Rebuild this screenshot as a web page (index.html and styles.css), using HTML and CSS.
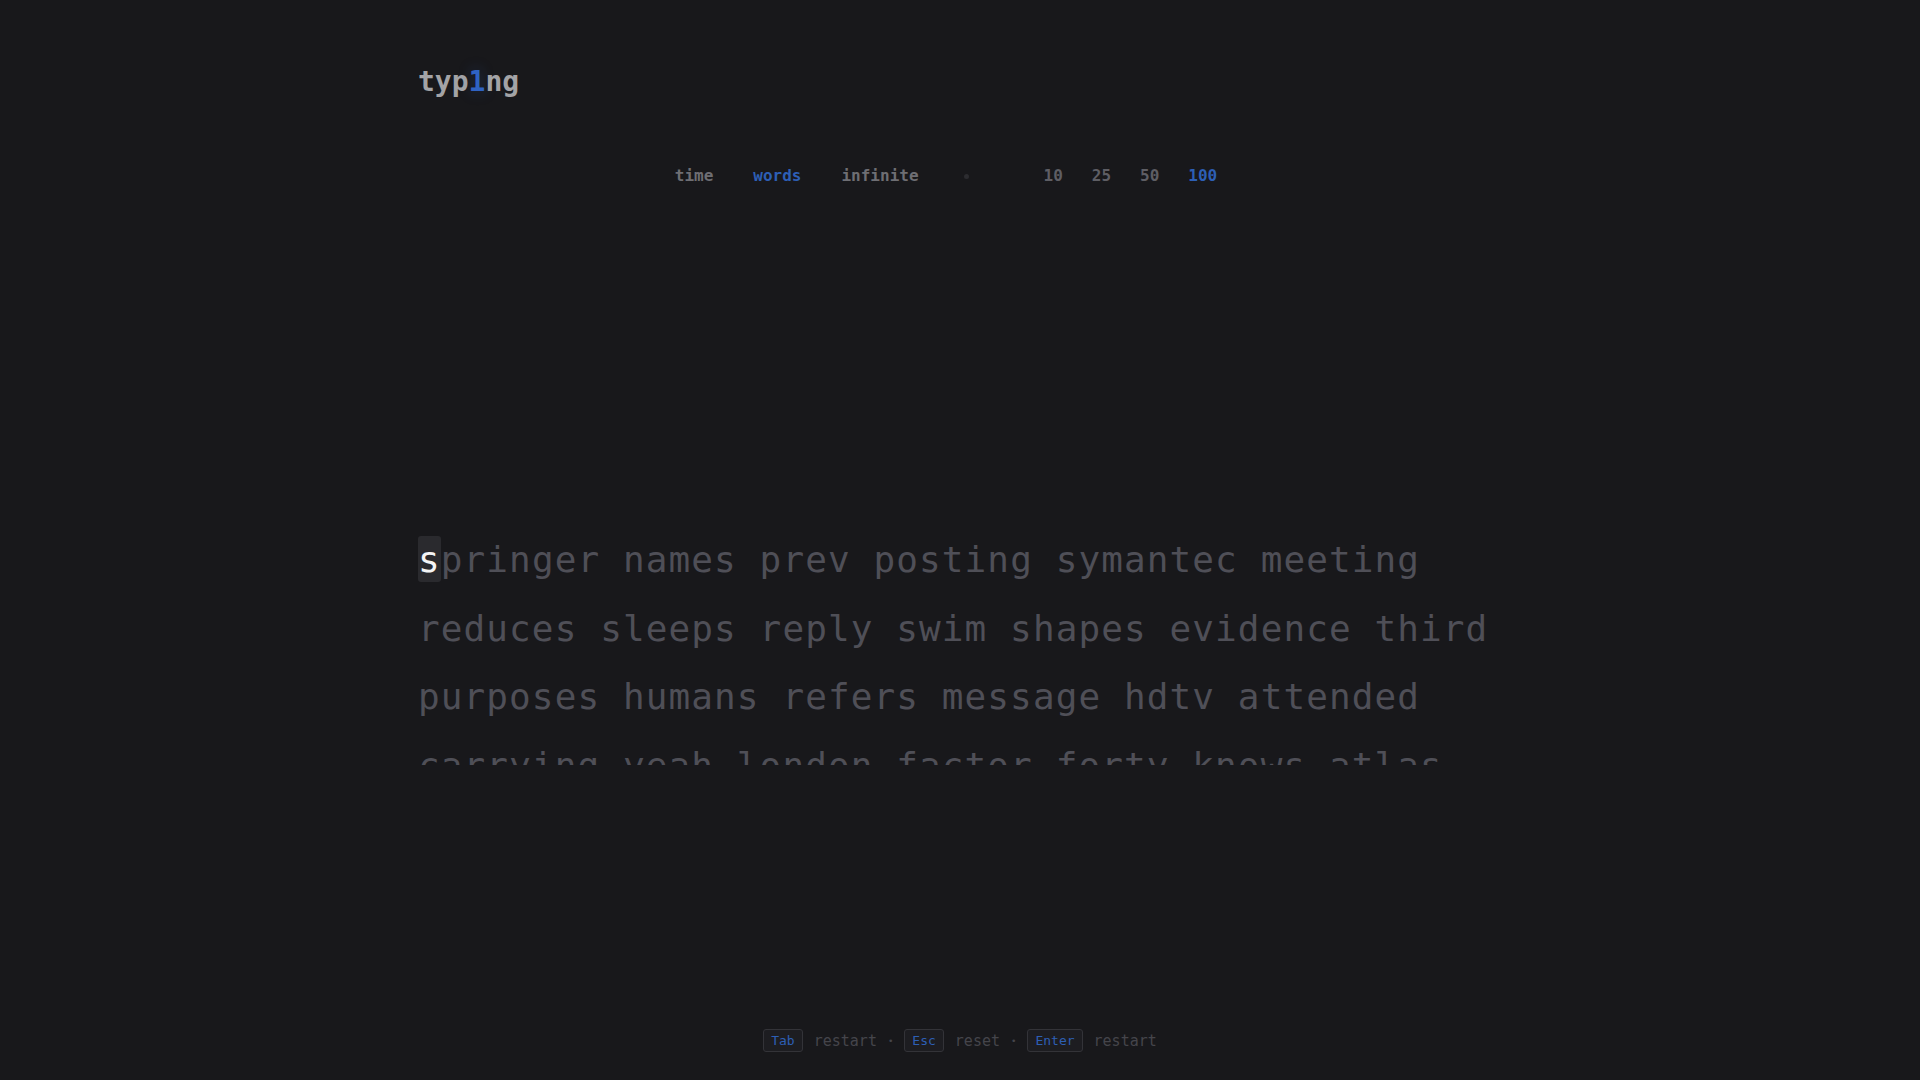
FILE: index.html
```html
<!DOCTYPE html>
<html lang="en">
<head>
<meta charset="utf-8">
<title>typ1ng</title>
<link rel="stylesheet" href="styles.css">
</head>
<body>
<div class="app">
  <header class="header">
    <div class="logo">typ<span class="logo-accent">1</span>ng</div>
  </header>

  <nav class="menu">
    <div class="menu-group modes">
      <span class="menu-item">time</span>
      <span class="menu-item active">words</span>
      <span class="menu-item">infinite</span>
    </div>
    <span class="menu-sep"></span>
    <div class="menu-group counts">
      <span class="menu-item count">10</span>
      <span class="menu-item count">25</span>
      <span class="menu-item count">50</span>
      <span class="menu-item active">100</span>
    </div>
  </nav>

  <main class="words">
    <div class="line"><span class="cursor">s</span>pringer names prev posting symantec meeting</div>
    <div class="line">reduces sleeps reply swim shapes evidence third</div>
    <div class="line">purposes humans refers message hdtv attended</div>
    <div class="line">carrying yeah london factor forty knows atlas</div>
    <div class="line">remember</div>
  </main>

  <footer class="footer">
    <span class="key">Tab</span>
    <span class="label">restart</span>
    <span class="dot">•</span>
    <span class="key">Esc</span>
    <span class="label">reset</span>
    <span class="dot">•</span>
    <span class="key">Enter</span>
    <span class="label">restart</span>
  </footer>
</div>
</body>
</html>
```
FILE: styles.css
```css
* { box-sizing: border-box; }

html, body {
  margin: 0;
  padding: 0;
  background: #18181b;
  height: 100%;
}

body {
  font-family: "DejaVu Sans Mono", "Liberation Mono", monospace;
  color: #a1a1aa;
}

.app {
  width: 1084px;
  margin: 0 auto;
  height: 100vh;
  display: flex;
  flex-direction: column;
}

.header {
  padding-top: 64px;
}

.logo {
  font-size: 28px;
  line-height: 36px;
  font-weight: 600;
  color: #a3a3a6;
}

.logo-accent {
  color: #2f63c4;
  text-shadow: 0 0 14px rgba(47, 99, 196, 0.35);
}

.menu {
  margin-top: 64px;
  display: flex;
  justify-content: center;
  align-items: center;
  padding-right: 28px;
  font-size: 16px;
  line-height: 24px;
  font-weight: bold;
}

.menu-group {
  display: flex;
  align-items: center;
}

.modes { gap: 40px; }
.counts { gap: 29px; }

.menu-item {
  color: #6e6e73;
}

.menu-item.count {
  color: #5e5e64;
}

.menu-item.active {
  color: #2d5fb5;
}

.menu-sep {
  width: 5px;
  height: 5px;
  border-radius: 50%;
  background: #2c2c30;
  margin-left: 45px;
  margin-right: 75px;
}

.words {
  margin-top: 338px;
  height: 239px;
  overflow: hidden;
  font-size: 36px;
  line-height: 68.5px;
  letter-spacing: 1.1px;
  color: #4f4f57;
  white-space: nowrap;
}

.cursor {
  background: #2a2a2e;
  color: #f4f4f5;
  border-radius: 3px;
  padding: 3px 0 2px;
}

.footer {
  margin-top: auto;
  padding-bottom: 28px;
  display: flex;
  justify-content: center;
  align-items: center;
  gap: 11px;
}

.key {
  font-size: 13px;
  line-height: 21px;
  padding: 0 7px;
  color: #2d5fb5;
  background: #1d1d21;
  border: 1px solid #333338;
  border-radius: 3px;
}

.label {
  font-size: 15px;
  line-height: 22px;
  color: #45454b;
}

.dot {
  font-size: 9px;
  line-height: 22px;
  color: #45454b;
}
```
